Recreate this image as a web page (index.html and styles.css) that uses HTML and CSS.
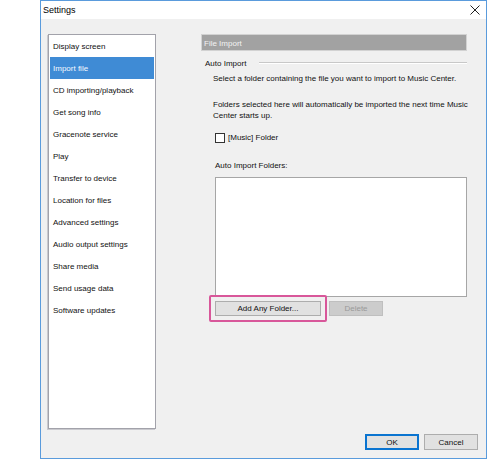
FILE: index.html
```html
<!DOCTYPE html>
<html>
<head>
<meta charset="utf-8">
<title>Settings</title>
<link rel="stylesheet" href="styles.css">
</head>
<body>
<div class="page">
  <div class="window">
    <div class="titlebar">
      <span class="title">Settings</span>
      <svg class="close" width="10" height="10" viewBox="0 0 10 10"><path d="M0.5 0.5 L9.5 9.5 M9.5 0.5 L0.5 9.5" stroke="#222" stroke-width="1" fill="none"/></svg>
    </div>
    <div class="content">
      <ul class="nav">
        <li>Display screen</li>
        <li class="active">Import file</li>
        <li>CD importing/playback</li>
        <li>Get song info</li>
        <li>Gracenote service</li>
        <li>Play</li>
        <li>Transfer to device</li>
        <li>Location for files</li>
        <li>Advanced settings</li>
        <li>Audio output settings</li>
        <li>Share media</li>
        <li>Send usage data</li>
        <li>Software updates</li>
      </ul>
      <div class="panel">
        <div class="panel-head">File Import</div>
        <div class="group-title"><span>Auto Import</span><span class="rule"></span></div>
        <p class="desc first">Select a folder containing the file you want to import to Music Center.</p>
        <p class="desc second">Folders selected here will automatically be imported the next time Music<br>Center starts up.</p>
        <div class="check"><span class="box"></span><span>[Music] Folder</span></div>
        <div class="list-label">Auto Import Folders:</div>
        <div class="folder-list"></div>
        <div class="actions">
          <div class="mark"><button class="btn wide">Add Any Folder...</button></div>
          <button class="btn disabled">Delete</button>
        </div>
      </div>
    </div>
    <div class="footer">
      <button class="btn ok">OK</button>
      <button class="btn">Cancel</button>
    </div>
  </div>
</div>
</body>
</html>
```
FILE: styles.css
```css
html, body {
  margin: 0;
  padding: 0;
  background: #ffffff;
}
body {
  font-family: "Liberation Sans", Arial, sans-serif;
  font-size: 8px;
  color: #111;
}
.page {
  padding-left: 40px;
  width: 447px;
}
.window {
  width: 447px;
  height: 459px;
  box-sizing: border-box;
  border: 1px solid #5a9bdc;
  background: #f0f0f0;
  display: flex;
  flex-direction: column;
}
.titlebar {
  height: 18px;
  background: #ffffff;
  display: flex;
  align-items: center;
  justify-content: space-between;
  padding: 0 4px 0 2px;
}
.title {
  font-size: 9px;
  color: #000;
}
.close {
  display: block;
  margin-right: 2px;
}
.content {
  display: flex;
  padding: 15px 0 0 7px;
}
.nav {
  list-style: none;
  margin: 0;
  padding: 0;
  width: 108px;
  height: 395px;
  box-sizing: border-box;
  border: 1px solid #a2a2aa;
  box-shadow: -1px 1px 0 #c9c9ce;
  background: #ffffff;
}
.nav li {
  height: 22px;
  line-height: 23px;
  margin: 0 1px;
  padding-left: 3px;
  white-space: nowrap;
}
.nav li.active {
  background: #3f8bd5;
  color: #f4f8ff;
}
.panel {
  margin-left: 45px;
  width: 266px;
  display: flex;
  flex-direction: column;
}
.panel-head {
  height: 17px;
  line-height: 17px;
  box-sizing: border-box;
  background: #a2a2a2;
  border: 1px solid #d2d2d2;
  color: #f2f2f2;
  padding-left: 2px;
}
.group-title {
  display: flex;
  align-items: center;
  margin-top: 7px;
  height: 10px;
  padding-left: 4px;
}
.group-title .rule {
  flex: 1;
  margin-left: 13px;
  border-top: 1px solid #c8c8c8;
  border-bottom: 1px solid #ffffff;
}
.desc {
  margin: 0;
  padding-left: 12px;
  line-height: 11px;
  white-space: nowrap;
}
.desc.first {
  margin-top: 5px;
}
.desc.second {
  margin-top: 15px;
}
.check {
  display: flex;
  align-items: center;
  margin-top: 11px;
  padding-left: 14px;
  height: 11px;
}
.check .box {
  width: 8px;
  height: 8px;
  border: 1px solid #333;
  background: #fff;
  margin-right: 3px;
}
.list-label {
  margin-top: 17px;
  padding-left: 14px;
  line-height: 11px;
}
.folder-list {
  margin: 6px 0 0 14px;
  width: 252px;
  height: 120px;
  box-sizing: border-box;
  background: #ffffff;
  border: 1px solid #a6a6a6;
}
.actions {
  display: flex;
  align-items: center;
  margin-top: -2px;
  padding-left: 8px;
}
.mark {
  padding: 4px;
  border: 2px solid #d8579a;
  border-radius: 2px;
}
.btn {
  font-family: "Liberation Sans", Arial, sans-serif;
  font-size: 8px;
  color: #111;
  height: 16px;
  padding: 0;
  margin: 0;
  box-sizing: border-box;
  border: 1px solid #adadad;
  background: #e1e1e1;
  display: block;
}
.btn.wide {
  width: 106px;
  height: 15px;
}
.btn.disabled {
  margin-left: 2px;
  width: 54px;
  height: 15px;
  background: #cccccc;
  border-color: #bfbfbf;
  color: #9a9a9a;
}
.footer {
  display: flex;
  justify-content: flex-end;
  gap: 5px;
  padding: 5px 8px 0 0;
}
.footer .btn {
  width: 54px;
}
.btn.ok {
  border: 1px solid #0a74d0;
  box-shadow: inset 0 0 0 1px #0a74d0;
}
```
